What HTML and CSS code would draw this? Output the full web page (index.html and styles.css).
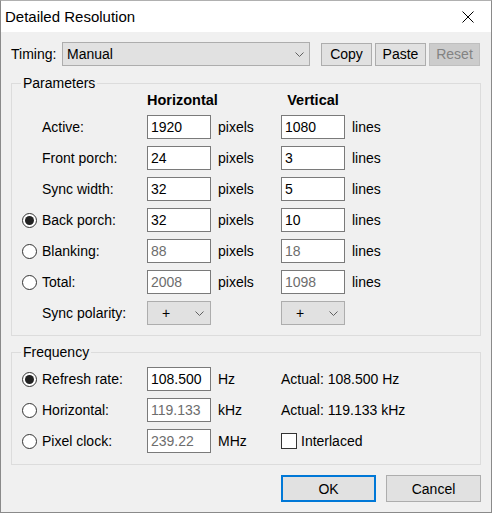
FILE: index.html
```html
<!DOCTYPE html>
<html lang="en">
<head>
  <meta charset="UTF-8">
  <title>Detailed Resolution</title>
  <link rel="stylesheet" href="styles.css">
</head>
<body>
  <div class="window">
    <div class="titlebar">
      <span class="title">Detailed Resolution</span>
      <span class="close">
        <svg width="12" height="12" viewBox="0 0 12 12"><path d="M0.5 0.5 L11.5 11.5 M11.5 0.5 L0.5 11.5" stroke="#000" stroke-width="1" fill="none"/></svg>
      </span>
    </div>

    <div class="content">
      <div class="timing-row">
        <span class="timing-label">Timing:</span>
        <div class="combo timing-combo">
          <span>Manual</span>
          <svg class="chev" width="9" height="5" viewBox="0 0 9 5"><path d="M0.5 0.5 L4.5 4.5 L8.5 0.5" stroke="#606060" fill="none"/></svg>
        </div>
        <div class="btn-group">
          <button class="btn small">Copy</button>
          <button class="btn small">Paste</button>
          <button class="btn small disabled">Reset</button>
        </div>
      </div>

      <fieldset class="group params">
        <legend>Parameters</legend>
        <div class="grid">
          <span></span><span></span>
          <span class="col-head">Horizontal</span>
          <span></span>
          <span class="col-head">Vertical</span>
          <span></span>

          <span></span>
          <span class="lbl">Active:</span>
          <span class="field">1920</span><span class="unit">pixels</span>
          <span class="field">1080</span><span class="unit">lines</span>

          <span></span>
          <span class="lbl">Front porch:</span>
          <span class="field">24</span><span class="unit">pixels</span>
          <span class="field">3</span><span class="unit">lines</span>

          <span></span>
          <span class="lbl">Sync width:</span>
          <span class="field">32</span><span class="unit">pixels</span>
          <span class="field">5</span><span class="unit">lines</span>

          <span class="radio checked"></span>
          <span class="lbl">Back porch:</span>
          <span class="field">32</span><span class="unit">pixels</span>
          <span class="field">10</span><span class="unit">lines</span>

          <span class="radio"></span>
          <span class="lbl">Blanking:</span>
          <span class="field dim">88</span><span class="unit">pixels</span>
          <span class="field dim">18</span><span class="unit">lines</span>

          <span class="radio"></span>
          <span class="lbl">Total:</span>
          <span class="field dim">2008</span><span class="unit">pixels</span>
          <span class="field dim">1098</span><span class="unit">lines</span>

          <span></span>
          <span class="lbl">Sync polarity:</span>
          <div class="combo polarity">
            <span>+</span>
            <svg class="chev" width="9" height="5" viewBox="0 0 9 5"><path d="M0.5 0.5 L4.5 4.5 L8.5 0.5" stroke="#606060" fill="none"/></svg>
          </div>
          <span></span>
          <div class="combo polarity">
            <span>+</span>
            <svg class="chev" width="9" height="5" viewBox="0 0 9 5"><path d="M0.5 0.5 L4.5 4.5 L8.5 0.5" stroke="#606060" fill="none"/></svg>
          </div>
          <span></span>
        </div>
      </fieldset>

      <fieldset class="group freq">
        <legend>Frequency</legend>
        <div class="grid">
          <span class="radio checked"></span>
          <span class="lbl">Refresh rate:</span>
          <span class="field">108.500</span><span class="unit">Hz</span>
          <span class="actual">Actual: 108.500 Hz</span>

          <span class="radio"></span>
          <span class="lbl">Horizontal:</span>
          <span class="field dim">119.133</span><span class="unit">kHz</span>
          <span class="actual">Actual: 119.133 kHz</span>

          <span class="radio"></span>
          <span class="lbl">Pixel clock:</span>
          <span class="field dim">239.22</span><span class="unit">MHz</span>
          <span class="actual check-row"><span class="checkbox"></span>Interlaced</span>
        </div>
      </fieldset>

      <div class="footer">
        <button class="btn big default">OK</button>
        <button class="btn big">Cancel</button>
      </div>
    </div>
  </div>
</body>
</html>
```

FILE: styles.css
```css
body {
  margin: 0;
  background-color: #f0f0f0;
  font-family: "Liberation Sans", Arial, sans-serif;
  font-size: 14px;
  color: #000;
}

.window {
  width: 492px;
  height: 513px;
  box-sizing: border-box;
  border: 1px solid #8a8a8a;
  border-top-color: #b0b0b0;
  background-color: #f0f0f0;
  display: flex;
  flex-direction: column;
}

.titlebar {
  height: 31px;
  background-color: #fff;
  display: flex;
  align-items: center;
  justify-content: space-between;
  padding-left: 4px;
}

.title {
  font-size: 15px;
  line-height: 31px;
}

.close {
  width: 46px;
  height: 31px;
  display: flex;
  align-items: center;
  justify-content: center;
}

.content {
  padding: 10px 10px 0 10px;
  display: flex;
  flex-direction: column;
}

.timing-row {
  display: flex;
  align-items: center;
  height: 24px;
}

.timing-label {
  width: 51px;
}

.combo {
  box-sizing: border-box;
  height: 24px;
  background-color: #e1e1e1;
  border: 1px solid #adadad;
  display: flex;
  align-items: center;
  justify-content: space-between;
}

.timing-combo {
  width: 248px;
  padding: 0 5px 0 4px;
}

.btn-group {
  display: flex;
  gap: 3px;
  margin-left: 11px;
}

.btn {
  box-sizing: border-box;
  background-color: #e1e1e1;
  border: 1px solid #adadad;
  font-family: inherit;
  font-size: 14px;
  color: #000;
  padding: 0;
}

.btn.small {
  width: 51px;
  height: 23px;
}

.btn.disabled {
  background-color: #cccccc;
  border-color: #bfbfbf;
  color: #838383;
}

.group {
  margin: 0;
  border: 1px solid #dcdcdc;
  padding: 0 9px 10px 9px;
  min-inline-size: 0;
}

.group legend {
  padding: 0 2px;
  line-height: 16px;
}

.params {
  margin-top: 9px;
}

.freq {
  margin-top: 8px;
  padding-top: 7px;
  padding-bottom: 11px;
}

.grid {
  display: grid;
  grid-template-columns: 21px 105px 64px 70px 64px 1fr;
  row-gap: 7px;
  align-items: center;
}

.col-head {
  font-weight: bold;
  font-size: 14.5px;
  line-height: 16px;
  text-align: center;
  white-space: nowrap;
  margin-top: 1px;
}

.field {
  box-sizing: border-box;
  height: 24px;
  line-height: 22px;
  background-color: #fff;
  border: 1px solid #7a7a7a;
  padding: 0 3px;
}

.field.dim {
  color: #6d6d6d;
}

.unit {
  padding-left: 7px;
}

.radio {
  box-sizing: border-box;
  width: 15px;
  height: 15px;
  border: 1px solid #333;
  border-radius: 50%;
  background-color: #fff;
  margin-left: 1px;
  display: flex;
  align-items: center;
  justify-content: center;
}

.radio.checked::after {
  content: "";
  width: 9px;
  height: 9px;
  border-radius: 50%;
  background-color: #222;
}

.polarity {
  padding: 0 6px 0 14px;
}

.actual {
  grid-column: 5 / span 2;
  white-space: nowrap;
}

.check-row {
  display: flex;
  align-items: center;
  gap: 4px;
}

.checkbox {
  box-sizing: border-box;
  width: 16px;
  height: 16px;
  border: 1px solid #333;
  background-color: #fff;
}

.footer {
  display: flex;
  justify-content: flex-end;
  gap: 10px;
  margin-top: 10px;
}

.btn.big {
  width: 95px;
  height: 27px;
}

.btn.default {
  border: 2px solid #0078d7;
}
```
